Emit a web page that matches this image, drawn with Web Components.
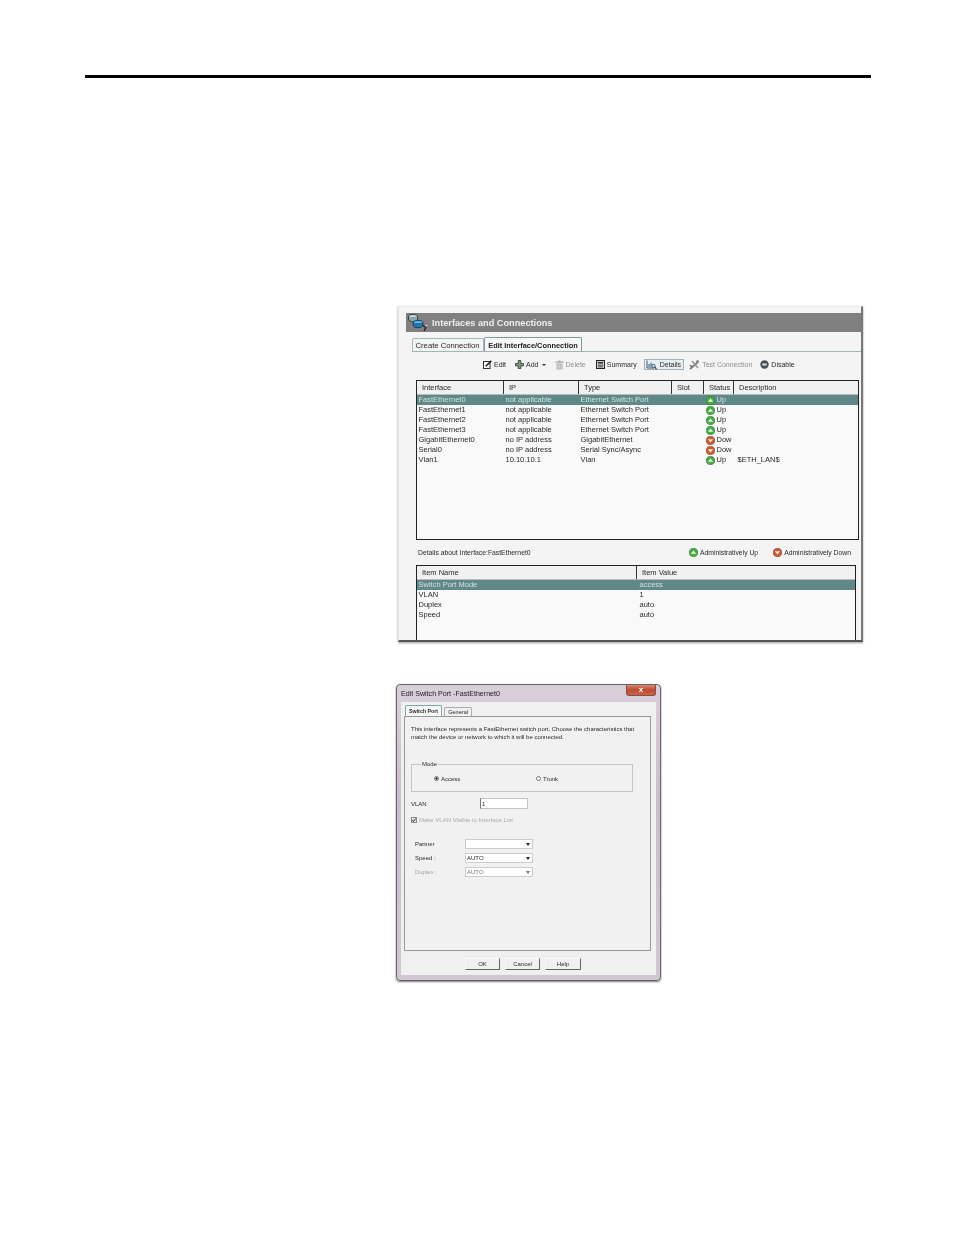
<!DOCTYPE html>
<html>
<head>
<meta charset="utf-8">
<style>
  html, body { margin: 0; padding: 0; background: #fff; }
  body { width: 954px; height: 1235px; overflow: hidden; font-family: "Liberation Sans", Arial, sans-serif; }
</style>
</head>
<body>
<manual-page>
  <interfaces-window></interfaces-window>
  <switch-port-dialog></switch-port-dialog>
</manual-page>

<script>
const UP_ICON = `<svg width="9" height="9" viewBox="0 0 9 9"><circle cx="4.5" cy="4.5" r="4.1" fill="#45ad3f" stroke="#2f7f33" stroke-width=".7"/><path d="M1.8 5.8 4.5 2.6 7.2 5.8Z" fill="#effaea"/></svg>`;
const DOWN_ICON = `<svg width="9" height="9" viewBox="0 0 9 9"><circle cx="4.5" cy="4.5" r="4.1" fill="#cf5a30" stroke="#8f3a22" stroke-width=".7"/><path d="M1.8 3.2 4.5 6.4 7.2 3.2Z" fill="#fbe9df"/></svg>`;

class ManualPage extends HTMLElement {
  constructor () {
    super();
    this.attachShadow({ mode: "open" });
    this.shadowRoot.innerHTML = `
      <style>
        :host { display: block; width: 954px; height: 1235px; padding-top: 75px; box-sizing: border-box; }
        .rule { height: 3px; background: #000; margin: 0 83px 0 85px; }
        .shots { display: flex; flex-direction: column; align-items: flex-start; }
        ::slotted(interfaces-window) { margin: 228px 0 0 398px; }
        ::slotted(switch-port-dialog) { margin: 42px 0 0 396px; }
      </style>
      <div class="rule"></div>
      <div class="shots"><slot></slot></div>
    `;
  }
}

class InterfacesWindow extends HTMLElement {
  constructor () {
    super();
    this.attachShadow({ mode: "open" });
    const iface = [
      ["FastEthernet0", "not applicable", "Ethernet Switch Port", "up", "Up", ""],
      ["FastEthernet1", "not applicable", "Ethernet Switch Port", "up", "Up", ""],
      ["FastEthernet2", "not applicable", "Ethernet Switch Port", "up", "Up", ""],
      ["FastEthernet3", "not applicable", "Ethernet Switch Port", "up", "Up", ""],
      ["GigabitEthernet0", "no IP address", "GigabitEthernet", "down", "Dow", ""],
      ["Serial0", "no IP address", "Serial Sync/Async", "down", "Dow", ""],
      ["Vlan1", "10.10.10.1", "Vlan", "up", "Up", "$ETH_LAN$"]
    ];
    const rows = iface.map((r, i) => `
      <div class="row ${i === 0 ? "sel" : ""}">
        <span style="width:87px">${r[0]}</span><span style="width:75px">${r[1]}</span><span style="width:125px">${r[2]}</span>
        <span class="st">${r[3] === "up" ? UP_ICON : DOWN_ICON}${r[4]}</span><span>${r[5]}</span>
      </div>`).join("");
    const details = [["Switch Port Mode", "access"], ["VLAN", "1"], ["Duplex", "auto"], ["Speed", "auto"]];
    const detailRows = details.map((r, i) => `
      <div class="row ${i === 0 ? "sel" : ""}"><span style="width:221px">${r[0]}</span><span>${r[1]}</span></div>`).join("");
    this.shadowRoot.innerHTML = `
      <style>
        :host { display: block; width: 465px; height: 336px; box-sizing: border-box; background: #f4f4f4; border: 1px solid #e8e8e8; border-bottom: 2px solid #555; border-right: 2px solid #777; box-shadow: 0 1px 2px #999; font-size: 7.5px; color: #2a2a2a; overflow: hidden; padding: 6px 0 0 7px; filter: blur(.35px); }
        .head { height: 19px; background: #808080; color: #eee; font-weight: bold; font-size: 9.2px; display: flex; align-items: center; gap: 3px; }
        .tabs { display: flex; height: 13px; margin: 6px 0 0 6px; align-items: flex-end; }
        .tab { height: 12px; line-height: 14px; padding: 0 2.5px; border: 1px solid #a8b8b8; border-bottom: 0; border-radius: 2px 2px 0 0; width: 65px; font-size: 7.7px; white-space: nowrap; }
        .tab.on { height: 13px; line-height: 15px; font-weight: bold; font-size: 7.4px; background: #f7f7f7; border-color: #7f9c9c; width: 91px; text-align: center; color: #222; }
        .line { border-top: 1px solid #a5b5b5; margin: 0 0 0 6px; }
        .tools { display: flex; height: 25px; align-items: center; margin: 0 0 3px 77px; font-size: 7px; white-space: nowrap; }
        .tools span { display: flex; align-items: center; gap: 2px; }
        .tools .off { color: #8f8f8f; }
        .tools .box { border: 1px solid #9fb2bb; background: #e8edf0; padding: 0 2px 0 1px; height: 9px; gap: 3px; }
        .tools i { display: block; width: 0; height: 0; border: 2px solid transparent; border-top: 2.5px solid #333; border-bottom: 0; margin-left: 1px; }
        .table { margin-left: 10px; border: 1px solid #222; background: #f9f9f9; overflow: hidden; }
        .cols { display: flex; height: 13px; line-height: 14px; background: #f1f1f1; border-bottom: 1px solid #bbb; }
        .cols span { border-right: 1px solid #333; padding-left: 5px; box-sizing: border-box; }
        .cols span:last-child { border-right: 0; }
        .row { display: flex; height: 10px; line-height: 10px; padding-left: 1.5px; white-space: nowrap; }
        .row.sel { background: #5f8888; color: #d5e0e0; }
        .st { display: flex; align-items: center; gap: 2px; width: 32px; }
        .main { width: 441px; height: 158px; }
        .legend { display: flex; height: 25px; align-items: center; margin: 0 0 0 12px; width: 433px; justify-content: space-between; font-size: 6.8px; }
        .legend div { display: flex; gap: 2px; align-items: center; }
        .sub { width: 438px; height: 90px; border-bottom: 0; }
      </style>
      <div class="head">
        <svg width="23" height="19" viewBox="0 0 23 19">
          <ellipse cx="7" cy="4" rx="4.5" ry="2.6" fill="#c6d3d8" stroke="#1c2a33" stroke-width=".8"/>
          <path d="M2.5 4v2.2c0 1.4 2 2.6 4.5 2.6s4.5-1.2 4.5-2.6V4" fill="#8fa4ad" stroke="#1c2a33" stroke-width=".8"/>
          <ellipse cx="12" cy="10" rx="4.8" ry="2.6" fill="#55b7e6" stroke="#12303f" stroke-width=".8"/>
          <path d="M7.2 10v2c0 1.5 2.1 2.7 4.8 2.7s4.8-1.2 4.8-2.7v-2" fill="#1f74b4" stroke="#12303f" stroke-width=".8"/>
          <path d="M17 12.5 20 14.5 18 18" fill="none" stroke="#111" stroke-width="1.1"/>
          <path d="M19 13 21.5 12" stroke="#ddd" stroke-width="1"/>
        </svg>
        Interfaces and Connections
      </div>
      <div class="tabs"><div class="tab">Create Connection</div><div class="tab on">Edit Interface/Connection</div></div>
      <div class="line"></div>
      <div class="tools">
        <span style="margin-right:9px"><svg width="9" height="9" viewBox="0 0 9 9"><rect x=".5" y="1.5" width="6.5" height="7" fill="#f4f4f4" stroke="#333"/><path d="M2.8 6.2 8.3.9" stroke="#222" stroke-width="1.5"/></svg>Edit</span>
        <span style="margin-right:9px"><svg width="9" height="9" viewBox="0 0 9 9"><path d="M3.2.5h2.6v3h2.7v2.4H5.8v2.6H3.2V5.900H.5V3.500h2.700Z" fill="#7f9a84" stroke="#2d3a33" stroke-width=".8"/></svg>Add<i></i></span>
        <span class="off" style="margin-right:10px"><svg width="9" height="10" viewBox="0 0 9 10"><path d="M3.500.5h2v1h3v1.200H.5V1.500h3Z" fill="#a8a8a8"/><path d="M1.500 3.500h6V9.500h-6Z" fill="#b5b5b5"/><path d="M3 4.500v4M4.500 4.500v4M6 4.500v4" stroke="#eee" stroke-width=".5"/></svg>Delete</span>
        <span style="margin-right:7px"><svg width="9" height="9" viewBox="0 0 9 9"><rect x=".5" y=".5" width="8" height="8" fill="#c8cdd0" stroke="#222"/><rect x="2" y="2" width="5" height="1.600" fill="#333"/><path d="M2 5.200h5M2 6.800h5" stroke="#333" stroke-width=".8"/></svg>Summary</span>
        <span class="box" style="margin-right:5px"><svg width="11" height="10" viewBox="0 0 11 10"><path d="M1 .5v7.500h7" fill="none" stroke="#345" stroke-width=".9"/><path d="M3 7V4M5 7V2.500M7 7V4.500" stroke="#3a78b8" stroke-width="1.200"/><circle cx="7.500" cy="6" r="1.700" fill="#cfe3f4" stroke="#234" stroke-width=".7"/><path d="M8.700 7.200 10.500 9.200" stroke="#222" stroke-width="1.100"/></svg>Details</span>
        <span class="off" style="margin-right:8px"><svg width="11" height="11" viewBox="0 0 11 11"><path d="M1 10 9 3" stroke="#777" stroke-width="1.700"/><path d="M3 2 9 9" stroke="#999" stroke-width="1.600"/><circle cx="8.500" cy="2.500" r="1.500" fill="#888"/><path d="M1 6 3 8" stroke="#666" stroke-width="1.200"/></svg>Test Connection</span>
        <span><svg width="9" height="9" viewBox="0 0 9 9"><circle cx="4.500" cy="4.500" r="4.200" fill="#4a4f55"/><ellipse cx="4.500" cy="4.500" rx="2.600" ry="1.300" fill="#c9d3dc"/></svg>Disable</span>
      </div>
      <div class="table main">
        <div class="cols"><span style="width:87px">Interface</span><span style="width:75px">IP</span><span style="width:93px">Type</span><span style="width:32px">Slot</span><span style="width:30px">Status</span><span style="flex:1">Description</span></div>
        ${rows}
      </div>
      <div class="legend"><span>Details about Interface:FastEthernet0</span><div>${UP_ICON}Administratively Up<span style="width:11px"></span>${DOWN_ICON}Administratively Down</div></div>
      <div class="table sub">
        <div class="cols"><span style="width:220px">Item Name</span><span style="flex:1">Item Value</span></div>
        ${detailRows}
      </div>
    `;
  }
}

class SwitchPortDialog extends HTMLElement {
  constructor () {
    super();
    this.attachShadow({ mode: "open" });
    this.shadowRoot.innerHTML = `
      <style>
        :host { display: block; width: 265px; height: 297px; box-sizing: border-box; background: linear-gradient(#d9cfd9, #cbbccd 40%, #d2c6d4); border: 1px solid #666; border-radius: 4px; box-shadow: 0 1px 2px #777; font-size: 6px; color: #2a2a2a; padding: 0 4px 4px; filter: blur(.35px); }
        .title { display: flex; justify-content: space-between; height: 17px; line-height: 18px; font-size: 7.1px; color: #222; }
        .close { width: 30px; height: 11px; background: linear-gradient(#d98a72, #bd4a30 50%, #c9654a); border: 1px solid #8a4a48; border-top: 0; box-sizing: border-box; border-radius: 0 0 3px 3px; color: #fff; font-weight: bold; font-size: 8px; line-height: 9px; text-align: center; }
        .body { background: #f0f0f0; height: 273px; padding: 3px 5px 0 3px; box-sizing: border-box; }
        .tabs { display: flex; align-items: flex-end; height: 11px; padding-left: 1px; gap: 2px; }
        .tab { height: 8px; line-height: 9px; padding: 0 3px; border: 1px solid #aab; border-bottom: 0; border-radius: 2px 2px 0 0; font-size: 5.6px; }
        .tab.on { height: 10px; line-height: 10px; font-weight: bold; background: #f8f8f8; border-color: #7aa; font-size: 5.3px; }
        .panel { height: 235px; border: 1px solid #999; box-sizing: border-box; background: #f1f1f1; padding: 8px 6px; }
        .intro { line-height: 8px; height: 36px; white-space: nowrap; }
        fieldset { margin: 0; border: 1px solid #c4c4c4; width: 220px; min-width: 0; height: 29px; box-sizing: content-box; padding: 0; display: flex; align-items: flex-start; }
        legend { font-size: 6px; line-height: 7px; padding: 0 1px; margin-left: 9px; }
        .radios { display: flex; align-items: flex-start; padding: 7.5px 0 0 22px; }
        .radios span { width: 102px; display: flex; align-items: center; gap: 2px; }
        .radios span:last-child { width: auto; }
        .radios u { display: block; width: 5px; height: 5px; border: .7px solid #777; border-radius: 50%; box-sizing: border-box; background: #fff; }
        .radios u.on { background: radial-gradient(circle, #333 45%, #fff 55%); }
        .vlan { display: flex; align-items: center; margin-top: 6px; height: 11px; }
        .vlan i { font-style: normal; display: block; width: 69px; }
        .vlan b { font-weight: normal; display: block; width: 48px; height: 11px; line-height: 10px; background: #fff; border: 1px solid #c4c4c4; border-left-color: #777; box-sizing: border-box; padding-left: 1px; }
        .check { color: #aaa; margin: 7px 0 15px; height: 8px; line-height: 8px; display: flex; gap: 2px; align-items: center; }
        .combo-row { display: flex; align-items: center; height: 10px; margin-bottom: 4px; padding-left: 4px; }
        .combo-row i { font-style: normal; display: block; width: 50px; }
        .combo { width: 68px; height: 10px; line-height: 9px; background: #fff; border: 1px solid #ccc; box-sizing: border-box; padding-left: 1px; display: flex; align-items: center; }
        .combo::after { content: ""; margin-left: auto; margin-right: 2px; border: 2px solid transparent; border-top: 3px solid #222; border-bottom: 0; }
        .off { color: #a5a5a5; }
        .off .combo { color: #777; }
        .off .combo::after { border-top-color: #777; }
        .btns { display: flex; gap: 5px; padding: 7px 0 0 61px; }
        .btn { width: 35px; height: 12px; line-height: 10px; text-align: center; background: #f0f0f0; border: 1px solid #fafafa; border-right-color: #666; border-bottom-color: #666; box-sizing: border-box; }
      </style>
      <div class="title"><span>Edit Switch Port -FastEthernet0</span><div class="close">x</div></div>
      <div class="body">
        <div class="tabs"><div class="tab on">Switch Port</div><div class="tab">General</div></div>
        <div class="panel">
          <div class="intro">This interface represents a FastEthernet switch port. Choose the characteristics that<br>match the device or network to which it will be connected.</div>
          <fieldset><legend>Mode</legend><div class="radios"><span><u class="on"></u>Access</span><span><u></u>Trunk</span></div></fieldset>
          <div class="vlan"><i>VLAN</i><b>1</b></div>
          <div class="check"><svg width="6" height="6" viewBox="0 0 6 6"><rect x=".5" y=".5" width="5" height="5" fill="#e4e4e4" stroke="#888"/><path d="M1.300 3 2.500 4.500 4.700 1.500" fill="none" stroke="#333" stroke-width="1"/></svg>Make VLAN Visible to Interface List</div>
          <div class="combo-row"><i>Partner</i><div class="combo"></div></div>
          <div class="combo-row"><i>Speed :</i><div class="combo">AUTO</div></div>
          <div class="combo-row off"><i>Duplex :</i><div class="combo">AUTO</div></div>
        </div>
        <div class="btns"><div class="btn">OK</div><div class="btn">Cancel</div><div class="btn" style="width:36px">Help</div></div>
      </div>
    `;
  }
}

customElements.define("manual-page", ManualPage);
customElements.define("interfaces-window", InterfacesWindow);
customElements.define("switch-port-dialog", SwitchPortDialog);
</script>
</body>
</html>
